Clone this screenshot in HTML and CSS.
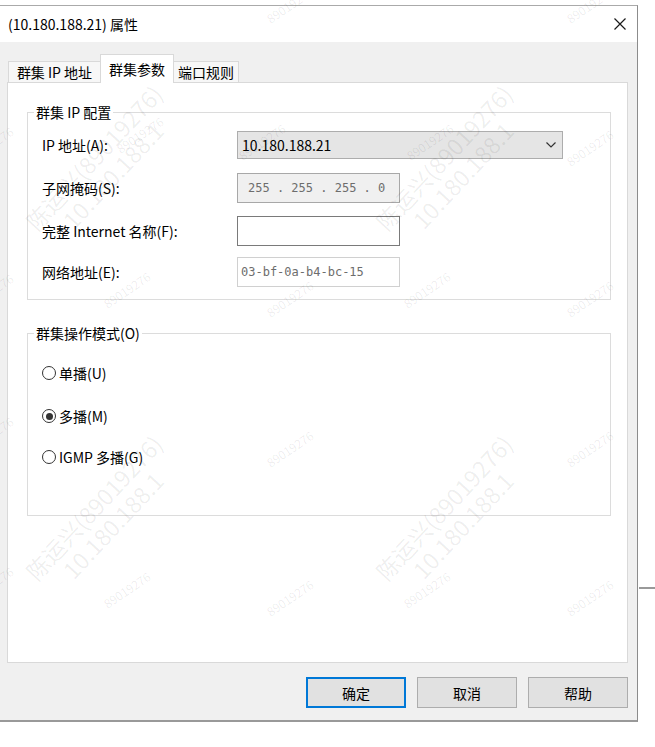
FILE: index.html
```html
<!DOCTYPE html>
<html lang="zh-CN">

<head>
    <meta charset="UTF-8">
    <meta name="viewport" content="width=device-width, initial-scale=1.0">
    <title>(10.180.188.21) 属性</title>
    <link rel="stylesheet" href="styles.css">
</head>

<body>

    <div class="dialog">
        <div class="titlebar">
            <span class="title">(10.180.188.21) 属性</span>
            <svg class="close" width="12" height="12" viewBox="0 0 12 12">
                <path d="M0.5 0.5 L11.5 11.5 M11.5 0.5 L0.5 11.5" stroke="#1a1a1a" stroke-width="1.2" fill="none"/>
            </svg>
        </div>

        <div class="content">
            <div class="tabs">
                <div class="tab tab-ip">群集 IP 地址</div>
                <div class="tab tab-params active">群集参数</div>
                <div class="tab tab-ports">端口规则</div>
            </div>

            <div class="panel">
                <fieldset class="group group-ip">
                    <legend>群集 IP 配置</legend>

                    <div class="row row-combo">
                        <label>IP 地址(A):</label>
                        <div class="combo">
                            <span>10.180.188.21</span>
                            <svg width="10" height="6" viewBox="0 0 10 6">
                                <path d="M0.5 0.5 L5 5 L9.5 0.5" stroke="#333" stroke-width="1.2" fill="none"/>
                            </svg>
                        </div>
                    </div>

                    <div class="row row-mask">
                        <label>子网掩码(S):</label>
                        <div class="field field-mask">255 . 255 . 255 . 0</div>
                    </div>

                    <div class="row row-name">
                        <label>完整 Internet 名称(F):</label>
                        <div class="field field-name"></div>
                    </div>

                    <div class="row row-mac">
                        <label>网络地址(E):</label>
                        <div class="field field-mac">03-bf-0a-b4-bc-15</div>
                    </div>
                </fieldset>

                <fieldset class="group group-mode">
                    <legend>群集操作模式(O)</legend>

                    <div class="radio radio-uni"><span class="dot"></span>单播(U)</div>
                    <div class="radio radio-multi"><span class="dot checked"></span>多播(M)</div>
                    <div class="radio radio-igmp"><span class="dot"></span>IGMP 多播(G)</div>
                </fieldset>
            </div>

            <div class="buttons">
                <button class="default">确定</button>
                <button>取消</button>
                <button>帮助</button>
            </div>
        </div>
    </div>

    <!-- window behind the dialog -->
    <div class="behind"></div>

    <!-- watermark layer -->
    <div class="watermark">
        <div class="wm-big" style="left: 103px; top: 166px;">陈运兴(89019276)<br>10.180.188.1</div>
        <div class="wm-big" style="left: 453px; top: 166px;">陈运兴(89019276)<br>10.180.188.1</div>
        <div class="wm-big" style="left: 103px; top: 516px;">陈运兴(89019276)<br>10.180.188.1</div>
        <div class="wm-big" style="left: 453px; top: 516px;">陈运兴(89019276)<br>10.180.188.1</div>

        <div class="wm-small" style="left: 290px; top: 5px;">89019276</div>
        <div class="wm-small" style="left: 590px; top: 5px;">89019276</div>
        <div class="wm-small" style="left: -10px; top: 145px;">89019276</div>
        <div class="wm-small" style="left: 140px; top: 135px;">89019276</div>
        <div class="wm-small" style="left: 262px; top: 142px;">89019276</div>
        <div class="wm-small" style="left: 430px; top: 142px;">89019276</div>
        <div class="wm-small" style="left: 590px; top: 148px;">89019276</div>
        <div class="wm-small" style="left: -10px; top: 292px;">89019276</div>
        <div class="wm-small" style="left: 127px; top: 290px;">89019276</div>
        <div class="wm-small" style="left: 290px; top: 299px;">89019276</div>
        <div class="wm-small" style="left: 427px; top: 290px;">89019276</div>
        <div class="wm-small" style="left: 590px; top: 299px;">89019276</div>
        <div class="wm-small" style="left: -10px; top: 435px;">89019276</div>
        <div class="wm-small" style="left: 290px; top: 449px;">89019276</div>
        <div class="wm-small" style="left: 590px; top: 449px;">89019276</div>
        <div class="wm-small" style="left: -10px; top: 585px;">89019276</div>
        <div class="wm-small" style="left: 127px; top: 590px;">89019276</div>
        <div class="wm-small" style="left: 290px; top: 598px;">89019276</div>
        <div class="wm-small" style="left: 427px; top: 590px;">89019276</div>
        <div class="wm-small" style="left: 590px; top: 598px;">89019276</div>
    </div>

</body>

</html>
```

FILE: styles.css
```css
* {
    box-sizing: border-box;
}

body {
    margin: 0;
    width: 655px;
    height: 747px;
    position: relative;
    overflow: hidden;
    background-color: #fff;
    font-family: "Noto Sans CJK SC", "Liberation Sans", sans-serif;
    font-size: 14px;
    color: #000;
}

.dialog {
    width: 638px;
    margin-top: 5px;
    background-color: #f0f0f0;
    border-top: 1px solid #aaa;
    border-right: 1px solid #8c8c8c;
    border-bottom: 2px solid #999;
}

.titlebar {
    height: 36px;
    background-color: #fff;
    display: flex;
    align-items: center;
    justify-content: space-between;
    padding: 0 11px 0 8px;
}

.title {
    line-height: 20px;
}

.content {
    padding: 12px 9px 12px 7px;
}

/* tabs */
.tabs {
    height: 28px;
    display: flex;
    align-items: flex-end;
    margin-left: 1px;
    position: relative;
    z-index: 1;
}

.tab {
    height: 21px;
    line-height: 20px;
    text-align: center;
    background-color: #f7f7f7;
    border: 1px solid #d9d9d9;
    border-bottom: none;
}

.tab-ip {
    width: 93px;
}

.tab-params {
    width: 74px;
    margin-left: -1px;
}

.tab-ports {
    width: 66px;
    margin-left: -1px;
}

.tab.active {
    height: 29px;
    margin-bottom: -1px;
    padding-top: 4px;
    background-color: #fff;
    position: relative;
}

.panel {
    height: 581px;
    background-color: #fff;
    border: 1px solid #d9d9d9;
    padding: 21px 16px 0 19px;
}

/* group boxes */
.group {
    margin: 0;
    border: 1px solid #dcdcdc;
    padding: 0 16px 12px 14px;
    min-inline-size: auto;
}

.group legend {
    padding: 0 2px;
    margin-left: -8px;
    line-height: 16px;
}

.group-mode {
    margin-top: 25px;
    padding-bottom: 48px;
}

.row {
    display: flex;
    align-items: center;
}

.row label {
    width: 195px;
    flex-shrink: 0;
}

.row-combo {
    margin-top: 11px;
    height: 28px;
}

.row-mask {
    margin-top: 14px;
    height: 30px;
}

.row-name {
    margin-top: 13px;
    height: 30px;
}

.row-mac {
    margin-top: 11px;
    height: 30px;
}

.combo {
    width: 326px;
    height: 28px;
    display: flex;
    align-items: center;
    justify-content: space-between;
    padding: 0 6px 0 4px;
    background-color: #e5e5e5;
    border: 1px solid #adadad;
}

.field {
    width: 163px;
    height: 30px;
    display: flex;
    align-items: center;
    border: 1px solid #adadad;
    background-color: #fff;
}

.field-mask {
    background-color: #f0f0f0;
    border-color: #a8a8a8;
    color: #6d6d6d;
    font-family: "DejaVu Sans Mono", monospace;
    font-size: 12px;
    padding-left: 10px;
}

.field-name {
    border-color: #7a7a7a;
}

.field-mac {
    border-color: #d0d0d0;
    color: #6d6d6d;
    font-family: "DejaVu Sans Mono", monospace;
    font-size: 12px;
    padding-left: 3px;
}

/* radio buttons */
.radio {
    display: flex;
    align-items: center;
    height: 20px;
}

.radio-uni {
    margin-top: 22px;
}

.radio-multi {
    margin-top: 23px;
}

.radio-igmp {
    margin-top: 21px;
}

.dot {
    width: 14px;
    height: 14px;
    border: 1px solid #333;
    border-radius: 50%;
    margin-right: 3px;
    display: flex;
    align-items: center;
    justify-content: center;
}

.dot.checked::after {
    content: "";
    width: 7px;
    height: 7px;
    border-radius: 50%;
    background-color: #333;
}

/* buttons */
.buttons {
    display: flex;
    justify-content: flex-end;
    gap: 11px;
    margin-top: 14px;
}

button {
    width: 100px;
    height: 31px;
    padding: 0;
    font-family: inherit;
    font-size: 14px;
    color: #000;
    background-color: #e1e1e1;
    border: 1px solid #adadad;
}

button.default {
    border: 2px solid #0078d7;
}

.behind {
    position: absolute;
    left: 639px;
    top: 587px;
    width: 16px;
    height: 2px;
    background-color: #999;
}

/* watermark */
.watermark {
    position: absolute;
    left: 0;
    top: 0;
    width: 655px;
    height: 747px;
    pointer-events: none;
}

.wm-big,
.wm-small {
    position: absolute;
    white-space: nowrap;
    text-align: center;
}

.wm-big {
    font-size: 23px;
    line-height: 26px;
    color: rgba(0, 0, 0, 0.07);
    transform: translate(-50%, -50%) rotate(-47deg);
}

.wm-small {
    font-size: 12px;
    line-height: 14px;
    color: rgba(0, 0, 0, 0.08);
    transform: translate(-50%, -50%) rotate(-34deg);
}
```
